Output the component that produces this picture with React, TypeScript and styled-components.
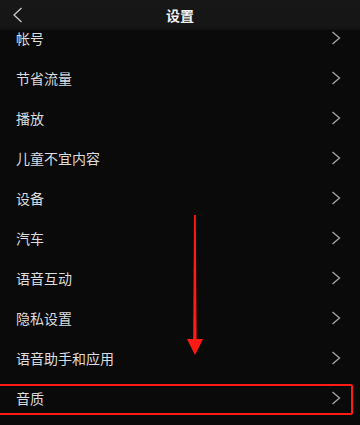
import React from 'react'
import styled, { createGlobalStyle } from 'styled-components'

const GlobalStyle = createGlobalStyle`
  html, body {
    margin: 0;
    padding: 0;
    background: #0a0a0a;
  }
  body {
    font-family: "Noto Sans CJK SC", "Noto Sans", sans-serif;
  }
`

const Screen = styled.div`
  position: relative;
  width: 360px;
  height: 425px;
  overflow: hidden;
  background: #0a0a0a;
`
const Header = styled.div`
  position: relative;
  z-index: 1;
  height: 30px;
  display: flex;
  align-items: center;
  justify-content: center;
  background: linear-gradient(#171717 0, #161616 26px, #111 30px);
`
const BackButton = styled.div`
  position: absolute;
  left: 12px;
  top: 7px;
  width: 14px;
  height: 16px;
  display: flex;
`
const Title = styled.h1`
  margin: 0;
  font-size: 14px;
  font-weight: 700;
  color: #f2f2f2;
  line-height: 1;
`
const List = styled.ul`
  list-style: none;
  margin: -12px 0 0;
  padding: 0;
`
const Row = styled.li`
  position: relative;
  height: 40px;
  display: flex;
  align-items: center;
  justify-content: space-between;
  padding: 0 19px 0 16px;
`
const Label = styled.span`
  font-size: 14px;
  color: #dcdcdc;
  letter-spacing: 0;
`
const Highlight = styled.div`
  position: absolute;
  left: -4px;
  right: 7px;
  top: 6px;
  bottom: 3px;
  border: 2.5px solid #ff1b14;
  border-radius: 2px;
  pointer-events: none;
`
const ArrowMark = styled.svg`
  position: absolute;
  left: 186px;
  top: 213px;
  z-index: 2;
`

const Chevron = ({ dir }: { dir: 'left' | 'right' }) =>
  dir === 'right' ? (
    <svg width="10" height="14" viewBox="0 0 10 14">
      <path d="M1.5 1 L8.5 7 L1.5 13" fill="none" stroke="#a8a8a8" strokeWidth="1.3" />
    </svg>
  ) : (
    <svg width="12" height="16" viewBox="0 0 12 16">
      <path d="M9.5 1 L2 8 L9.5 15" fill="none" stroke="#c8c8c8" strokeWidth="1.3" />
    </svg>
  )

const items = [
  '帐号',
  '节省流量',
  '播放',
  '儿童不宜内容',
  '设备',
  '汽车',
  '语音互动',
  '隐私设置',
  '语音助手和应用',
  '音质',
]

const App: React.FC = () => {
  return (
    <Screen>
      <GlobalStyle />
      <Header>
        <BackButton>
          <Chevron dir="left" />
        </BackButton>
        <Title>设置</Title>
      </Header>
      <List>
        {items.map((item) => (
          <Row key={item}>
            <Label>{item}</Label>
            <Chevron dir="right" />
            {item === '音质' && <Highlight />}
          </Row>
        ))}
      </List>
      <ArrowMark width="18" height="144" viewBox="0 0 18 144">
        <path d="M8 2 L9.8 2 L10.6 127 L7.2 127 Z" fill="#ff1b14" />
        <path d="M1 126 L17 126 L9 142 Z" fill="#ff1b14" />
      </ArrowMark>
    </Screen>
  )
}

export default App
